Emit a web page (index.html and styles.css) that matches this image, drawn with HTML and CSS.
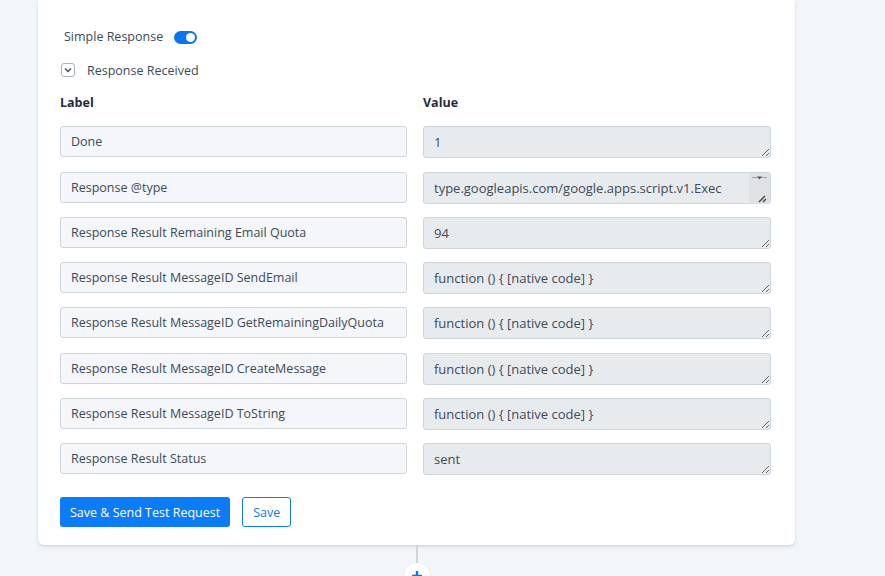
FILE: index.html
```html
<!DOCTYPE html>
<html lang="en">

<head>
  <meta charset="UTF-8">
  <meta name="viewport" content="width=device-width, initial-scale=1.0">
  <title>Response Received</title>
  <link rel="stylesheet" href="styles.css">
</head>

<body>
  <div class="wrapper">
    <div class="card">
      <div class="simple">
        <span>Simple Response</span>
        <span class="toggle"><span class="knob"></span></span>
      </div>
      <div class="received">
        <span class="check">
          <svg width="8" height="6" viewBox="0 0 8 6"><path d="M1 1.5l3 3 3-3" fill="none" stroke="#3b4a5a" stroke-width="1.3"/></svg>
        </span>
        <span>Response Received</span>
      </div>
      <div class="grid">
        <div class="head">Label</div>
        <div class="head">Value</div>

        <input class="label" type="text" value="Done" readonly>
        <textarea class="value" readonly>1</textarea>

        <input class="label" type="text" value="Response @type" readonly>
        <div class="scrolled">
          <textarea class="value long" readonly>type.googleapis.com/google.apps.script.v1.ExecutionResponse</textarea>
          <span class="scrollbar">
            <svg width="21" height="31" viewBox="0 0 21 31">
              <path d="M3 4.5h15" stroke="#9aa0a6" stroke-width="1"/>
              <path d="M8 3.5h5l-2.5 3z" fill="#555"/>
              <path d="M16 23l-6 6M17 26l-3 3" stroke="#444" stroke-width="1.4"/>
            </svg>
          </span>
        </div>

        <input class="label" type="text" value="Response Result Remaining Email Quota" readonly>
        <textarea class="value" readonly>94</textarea>

        <input class="label" type="text" value="Response Result MessageID SendEmail" readonly>
        <textarea class="value" readonly>function () { [native code] }</textarea>

        <input class="label" type="text" value="Response Result MessageID GetRemainingDailyQuota" readonly>
        <textarea class="value" readonly>function () { [native code] }</textarea>

        <input class="label" type="text" value="Response Result MessageID CreateMessage" readonly>
        <textarea class="value" readonly>function () { [native code] }</textarea>

        <input class="label" type="text" value="Response Result MessageID ToString" readonly>
        <textarea class="value" readonly>function () { [native code] }</textarea>

        <input class="label" type="text" value="Response Result Status" readonly>
        <textarea class="value" readonly>sent</textarea>
      </div>
      <div class="actions">
        <button class="button primary">Save &amp; Send Test Request</button>
        <button class="button outline">Save</button>
      </div>
    </div>
    <div class="connector"></div>
    <div class="add">
      <svg width="12" height="12" viewBox="0 0 12 12"><path d="M6 1v10M1 6h10" stroke="#0b74f0" stroke-width="2.4"/></svg>
    </div>
  </div>
</body>

</html>
```

FILE: styles.css
```css
html,
body {
  margin: 0;
  padding: 0;
  background-color: #f3f6f9;
  color: #3c4a58;
  font-family: "Open Sans", "Noto Sans", sans-serif;
  font-size: 12.5px;
}

* {
  box-sizing: border-box;
}

.wrapper {
  width: 757px;
  margin-left: 38px;
  display: flex;
  flex-direction: column;
  align-items: center;
}

.card {
  width: 100%;
  background-color: white;
  border-radius: 0 0 6px 6px;
  box-shadow: 0 2px 4px rgba(40, 60, 90, 0.12), 0 1px 2px rgba(0, 0, 0, 0.06);
  padding: 26px 24px 18px 22px;
}

.simple {
  display: flex;
  align-items: center;
  gap: 11px;
  padding-left: 4px;
  height: 20px;
}

.toggle {
  width: 23px;
  height: 13px;
  border-radius: 7px;
  background-color: #0b74f0;
  position: relative;
  margin-top: 2px;
}

.knob {
  position: absolute;
  right: 2px;
  top: 2px;
  width: 9px;
  height: 9px;
  border-radius: 50%;
  background-color: white;
}

.received {
  display: flex;
  align-items: center;
  gap: 12px;
  margin-top: 14px;
  padding-left: 1px;
  height: 20px;
}

.check {
  width: 14px;
  height: 14px;
  border: 1px solid #a9b3be;
  border-radius: 3px;
  display: flex;
  align-items: center;
  justify-content: center;
}

.grid {
  display: grid;
  grid-template-columns: 347px 348px;
  column-gap: 16px;
  row-gap: 14.3px;
  margin-top: 14px;
}

.head {
  font-weight: 700;
  color: #1f2b37;
  height: 16px;
  margin-bottom: 2px;
}

.label,
.value {
  font-family: "Open Sans", "Noto Sans", sans-serif;
  font-size: 12.5px;
  color: #3c4a58;
  border: 1px solid #cdd4dc;
  border-radius: 3px;
  padding: 6px 10px;
  outline: none;
}

.label {
  height: 31px;
  background-color: #f4f6f9;
}

.value {
  height: 32px;
  margin-bottom: -1px;
  font-size: 13px;
  background-color: #e8ebee;
  resize: vertical;
  line-height: 18px;
}

.scrolled {
  position: relative;
  display: flex;
}

.long {
  width: 100%;
  padding-top: 0;
  padding-bottom: 0;
  padding-right: 44px;
  line-height: 30px;
  word-break: break-all;
  overflow: hidden;
}

.scrollbar {
  position: absolute;
  right: 1px;
  top: 1px;
  width: 21px;
  height: 31px;
  background-color: #dfe1e4;
  border-radius: 0 2px 2px 0;
}

.scrollbar svg {
  display: block;
}

.actions {
  display: flex;
  gap: 12px;
  margin-top: 23px;
}

.button {
  height: 30px;
  padding: 0 10px;
  border-radius: 3px;
  font-family: "Open Sans", "Noto Sans", sans-serif;
  font-size: 12.5px;
  cursor: pointer;
}

.primary {
  background-color: #0b7bf6;
  border: none;
  color: white;
}

.outline {
  background-color: white;
  border: 1px solid #0b7bf6;
  color: #0b7bf6;
}

.connector {
  width: 2px;
  height: 18px;
  background-color: #cfd4da;
}

.add {
  width: 26px;
  height: 26px;
  border-radius: 50%;
  background-color: white;
  box-shadow: 0 1px 3px rgba(0, 0, 0, 0.12);
  display: flex;
  align-items: center;
  justify-content: center;
}
```
